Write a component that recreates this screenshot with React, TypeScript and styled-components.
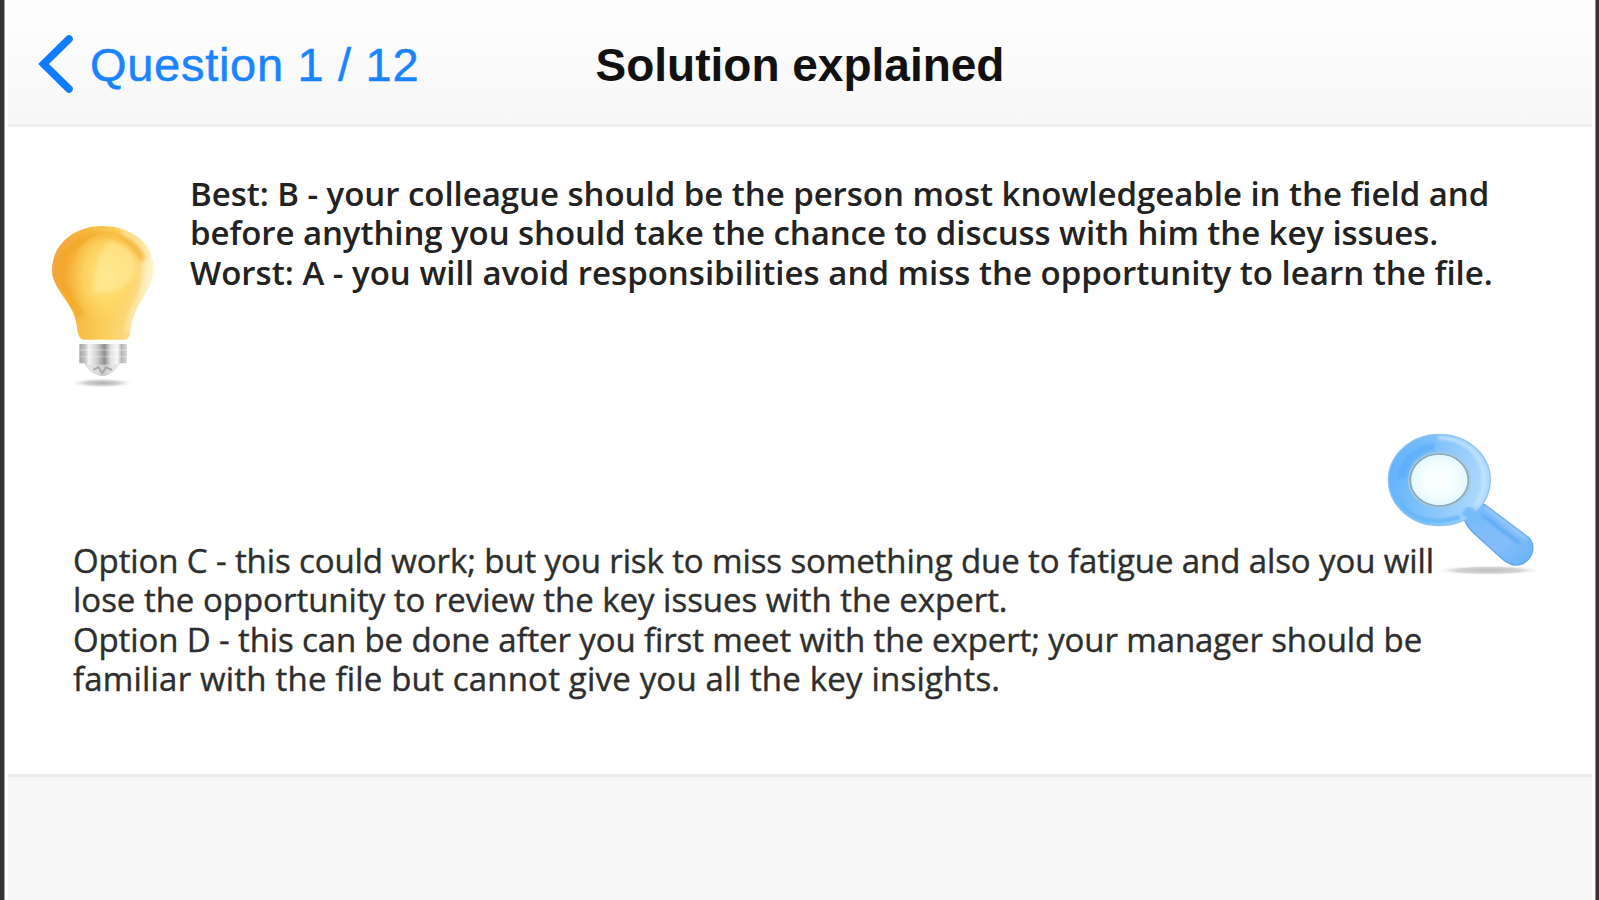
import React from "react";
import styled, { createGlobalStyle } from "styled-components";

const GlobalStyle = createGlobalStyle`
  * {
    box-sizing: border-box;
  }
  body {
    margin: 0;
    overflow: hidden;
    background: #ffffff;
  }
`;

const Screen = styled.div`
  display: flex;
  flex-direction: column;
  width: 1599px;
  height: 900px;
  padding: 0 4px;
  background: #ffffff;
  border-left: 4px solid #333333;
  border-right: 3px solid #333333;
  box-shadow: inset 1px 0 0 #a3a3a3, inset -1px 0 0 #8c8c8c;
`;

const Header = styled.header`
  display: grid;
  grid-template-columns: 1fr auto 1fr;
  align-items: center;
  flex: none;
  height: 127px;
  padding: 6px 30px 0;
  background: linear-gradient(#fefefe, #f7f7f7);
  border-bottom: 3px solid #eeeeee;
  font-family: "Liberation Sans", Arial, sans-serif;
`;

const BackButton = styled.button`
  display: flex;
  align-items: center;
  justify-self: start;
  padding: 0;
  border: none;
  outline: none;
  background: transparent;
  color: #1a84ff;
  font-family: inherit;
  font-size: 47px;
  line-height: 54px;
  letter-spacing: 0.7px;
  -webkit-text-stroke: 0.5px #1a84ff;
  cursor: pointer;

  svg {
    margin-right: 15px;
  }
`;

const Title = styled.h1`
  margin: 0;
  color: #111111;
  font-size: 46px;
  font-weight: 700;
  line-height: 54px;
`;

const Content = styled.main`
  display: flex;
  flex-direction: column;
  flex: none;
  height: 647px;
  padding-top: 47px;
  font-family: "Open Sans", "Trebuchet MS", sans-serif;
`;

const Answer = styled.section`
  display: flex;
  align-items: flex-start;
  height: 237px;
  padding-left: 22px;

  svg {
    flex: none;
    margin-top: 36px;
  }
`;

const Text = styled.div<{ $strong?: boolean }>`
  color: ${(p) => (p.$strong ? "#222222" : "#2e2e2e")};
  font-size: 33px;
  font-weight: ${(p) => (p.$strong ? 600 : 400)};
  line-height: 39.4px;
  margin-left: ${(p) => (p.$strong ? "10px" : "0")};
  -webkit-text-stroke: ${(p) => (p.$strong ? "0" : "0.4px #2e2e2e")};
`;

const Line = styled.div<{ $spacing: number }>`
  letter-spacing: ${(p) => p.$spacing}px;
  white-space: nowrap;
`;

const Details = styled.section`
  display: flex;
  align-items: flex-start;
  padding-left: 65px;

  ${Text} {
    width: 1297px;
    margin-top: 130px;
    flex: none;
  }
`;

const Footer = styled.footer`
  flex: 1;
  background: #f7f7f7;
  border-top: 3px solid #ececec;
`;

const Chevron = () => (
  <svg width="37" height="60" viewBox="0 0 37 60">
    <path d="M31 4 L5.5 29 L31 54" fill="none" stroke="#0f7bff" strokeWidth="7.5" strokeLinecap="round" />
  </svg>
);

const Bulb = () => (
  <svg width="150" height="190" viewBox="0 0 450 570">
    <defs>
      <linearGradient id="glass" x1="0" y1="0" x2="1" y2="0.15">
        <stop offset="0" stopColor="#f3a13c" />
        <stop offset="0.3" stopColor="#f5b53c" />
        <stop offset="0.65" stopColor="#fbcf5c" />
        <stop offset="0.9" stopColor="#fdda86" />
        <stop offset="1" stopColor="#fff3d2" />
      </linearGradient>
      <radialGradient id="glow" cx="0.5" cy="0.42" r="0.5">
        <stop offset="0" stopColor="#ffe584" />
        <stop offset="0.6" stopColor="#ffd968" stopOpacity="0.75" />
        <stop offset="1" stopColor="#ffd05c" stopOpacity="0" />
      </radialGradient>
      <linearGradient id="metal">
        <stop offset="0" stopColor="#a5a5a5" />
        <stop offset="0.12" stopColor="#c4c4c4" />
        <stop offset="0.2" stopColor="#f4f4f4" />
        <stop offset="0.38" stopColor="#cccccc" />
        <stop offset="0.53" stopColor="#8e8e8e" />
        <stop offset="0.66" stopColor="#e2e2e2" />
        <stop offset="0.8" stopColor="#f7f7f7" />
        <stop offset="0.89" stopColor="#b4b4b4" />
        <stop offset="1" stopColor="#dadada" />
      </linearGradient>
      <radialGradient id="bulbShadow">
        <stop offset="0" stopColor="#b0b0b0" />
        <stop offset="0.5" stopColor="#d2d2d2" />
        <stop offset="1" stopColor="#ffffff" stopOpacity="0" />
      </radialGradient>
      <filter id="soft" x="-20%" y="-20%" width="140%" height="140%">
        <feGaussianBlur stdDeviation="6" />
      </filter>
      <filter id="edge" x="-20%" y="-20%" width="140%" height="140%">
        <feGaussianBlur stdDeviation="2" />
      </filter>
    </defs>
    <ellipse cx="216" cy="519" rx="100" ry="15" fill="url(#bulbShadow)" />
    <path
      d="M217 48 C130 48 66 106 66 180 C66 226 103 255 126 300 C143 334 138 358 148 380 Q152 389 165 389 L285 389 Q296 388 299 374 C303 340 307 316 327 283 C350 244 370 215 370 170 C370 102 302 48 217 48 Z"
      fill="url(#glass)"
      filter="url(#edge)"
    />
    <path
      d="M276 66 C334 90 358 130 360 174 C360 214 333 244 315 282 C301 310 298 338 293 366"
      fill="none"
      stroke="#fff0bd"
      strokeWidth="9"
      filter="url(#soft)"
    />
    <path
      d="M150 320 C138 268 86 240 96 180 C90 122 160 76 218 78 C276 74 320 110 338 150"
      fill="none"
      stroke="#f2a51f"
      strokeWidth="22"
      filter="url(#soft)"
      opacity="0.6"
    />
    <ellipse cx="228" cy="220" rx="112" ry="150" fill="url(#glow)" />
    <path
      d="M188 250 C192 176 208 124 240 94 C282 102 312 128 316 170 C312 222 270 252 188 250 Z"
      fill="#fff0a8"
      opacity="0.45"
      filter="url(#soft)"
    />
    <path d="M150 384 H296" stroke="#f9cf8c" strokeWidth="6" filter="url(#edge)" />
    <g filter="url(#edge)">
      <path d="M148 402 H291 V460 H270 Q255 494 216 498 Q176 493 164 460 H148 Z" fill="url(#metal)" />
      <path d="M148 420 H291 M148 440 H291" stroke="#ffffff" strokeWidth="4" opacity="0.3" />
      <path d="M167 464 H267 Q252 494 216 498 Q180 493 167 464 Z" fill="#e0e0e0" opacity="0.75" />
      <path d="M190 480 L205 471 L216 490 L228 472 L246 480" fill="none" stroke="#aaaaaa" strokeWidth="6" />
    </g>
  </svg>
);

const Magnifier = () => (
  <svg width="180" height="180" viewBox="0 0 540 540">
    <defs>
      <linearGradient id="ring" x1="0" y1="0.35" x2="1" y2="0.55">
        <stop offset="0" stopColor="#62b2fb" />
        <stop offset="0.45" stopColor="#83c3fb" />
        <stop offset="1" stopColor="#b3dcfe" />
      </linearGradient>
      <linearGradient id="handle" x1="0" y1="0" x2="1" y2="1">
        <stop offset="0" stopColor="#72bafa" />
        <stop offset="0.6" stopColor="#85bdfb" />
        <stop offset="1" stopColor="#66b2f8" />
      </linearGradient>
      <radialGradient id="lens">
        <stop offset="0" stopColor="#ffffff" />
        <stop offset="0.55" stopColor="#f6fefe" />
        <stop offset="1" stopColor="#e2f7fc" />
      </radialGradient>
      <radialGradient id="lensShadow">
        <stop offset="0" stopColor="#bcbebe" />
        <stop offset="0.6" stopColor="#d4d6d6" />
        <stop offset="1" stopColor="#ffffff" stopOpacity="0" />
      </radialGradient>
      <filter id="lensSoft" x="-20%" y="-20%" width="140%" height="140%">
        <feGaussianBlur stdDeviation="4" />
      </filter>
    </defs>
    <ellipse cx="355" cy="478" rx="165" ry="15" fill="url(#lensShadow)" />
    <path
      d="M278 312 L318 274 Q332 272 346 282 L474 378 Q496 397 485 430 Q468 465 431 462 Q414 459 398 445 L310 365 Q285 340 278 312 Z"
      fill="url(#handle)"
      stroke="#62a9ea"
      strokeWidth="4"
    />
    <path d="M322 312 Q350 315 380 345 L450 398" fill="none" stroke="#57a7f2" strokeWidth="9" filter="url(#lensSoft)" />
    <path d="M344 288 L470 384" fill="none" stroke="#a2d2fc" strokeWidth="6" filter="url(#lensSoft)" />
    <ellipse cx="208" cy="207" rx="153" ry="137" fill="url(#ring)" stroke="#8cc4f2" strokeWidth="4" />
    <path
      d="M80 205 A128 114 0 0 1 194 94 L196 118 A92 84 0 0 0 110 202 Z"
      fill="#55aafa"
      opacity="0.6"
      filter="url(#lensSoft)"
    />
    <path
      d="M205 80 C285 80 340 130 342 205 C342 240 334 262 318 280"
      fill="none"
      stroke="#c9e7ff"
      strokeWidth="9"
      filter="url(#lensSoft)"
    />
    <path d="M90 270 C125 330 190 342 270 318" fill="none" stroke="#63b6fa" strokeWidth="12" filter="url(#lensSoft)" />
    {/* the ring runs into the top of the handle */}
    <path d="M284 296 L330 330" stroke="#74bbfa" strokeWidth="34" filter="url(#lensSoft)" />
    <ellipse cx="208" cy="207" rx="87" ry="78" fill="url(#lens)" stroke="#8aa9b4" strokeWidth="5" />
    <ellipse cx="208" cy="207" rx="92" ry="83" fill="none" stroke="#a8c9dc" strokeWidth="4" />
  </svg>
);

const bestAndWorst = [
  { text: "Best: B - your colleague should be the person most knowledgeable in the field and", spacing: -0.04 },
  { text: "before anything you should take the chance to discuss with him the key issues.", spacing: -0.08 },
  { text: "Worst: A - you will avoid responsibilities and miss the opportunity to learn the file.", spacing: 0.01 },
];

const otherOptions = [
  { text: "Option C - this could work; but you risk to miss something due to fatigue and also you will", spacing: -0.11 },
  { text: "lose the opportunity to review the key issues with the expert.", spacing: -0.02 },
  { text: "Option D - this can be done after you first meet with the expert; your manager should be", spacing: -0.12 },
  { text: "familiar with the file but cannot give you all the key insights.", spacing: 0.19 },
];

const App = () => {
  return (
    <>
      <GlobalStyle />
      <Screen>
        <Header>
          <BackButton>
            <Chevron />
            Question 1 / 12
          </BackButton>
          <Title>Solution explained</Title>
        </Header>

        <Content>
          <Answer>
            <Bulb />
            <Text $strong>
              {bestAndWorst.map((line) => (
                <Line key={line.text} $spacing={line.spacing}>
                  {line.text}
                </Line>
              ))}
            </Text>
          </Answer>

          <Details>
            <Text>
              {otherOptions.map((line) => (
                <Line key={line.text} $spacing={line.spacing}>
                  {line.text}
                </Line>
              ))}
            </Text>
            <Magnifier />
          </Details>
        </Content>

        <Footer />
      </Screen>
    </>
  );
};

export default App;
